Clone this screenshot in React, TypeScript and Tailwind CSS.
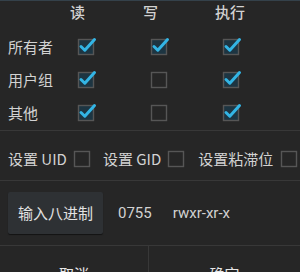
import React from 'react'

type Row = { label: string; checks: boolean[] }

const rows: Row[] = [
  { label: '所有者', checks: [true, true, true] },
  { label: '用户组', checks: [true, false, true] },
  { label: '其他', checks: [true, false, true] },
]

function Box({ checked }: { checked?: boolean }) {
  return (
    <svg width="20" height="20" viewBox="0 0 20 20" className="overflow-visible">
      <rect x="1.5" y="3.5" width="15" height="15" fill={checked ? '#1d3542' : 'none'} stroke="#565656" strokeWidth="1.4" />
      {checked && (
        <path d="M4 10.5 L7.8 14.2 L17.5 3.5" fill="none" stroke="#33b5e5" strokeWidth="3" strokeLinecap="round" strokeLinejoin="round" />
      )}
    </svg>
  )
}

export default function App() {
  return (
    <div
      className="w-[300px] h-[272px] overflow-hidden bg-[#262626] text-[#d2d2d2] border-t border-[#34414a]"
      style={{ fontFamily: '"Noto Sans CJK SC", "Noto Sans", sans-serif' }}
    >
      <div className="grid grid-cols-[62px_73px_72px_1fr] px-2 h-[23px] items-center text-[15px] font-medium">
        <div />
        <div>读</div>
        <div>写</div>
        <div>执行</div>
      </div>
      <div className="mt-[7px]">
        {rows.map(r => (
          <div key={r.label} className="grid grid-cols-[69px_73px_72px_1fr] px-2 h-[33px] items-center text-[15px]">
            <div>{r.label}</div>
            {r.checks.map((c, i) => (
              <div key={i} className="-mt-[3px]"><Box checked={c} /></div>
            ))}
          </div>
        ))}
      </div>
      <div className="h-px bg-[#383838]" />
      <div className="flex items-center h-[49px] pt-[7px] pl-2 text-[15px] whitespace-nowrap">
        <span>设置 UID</span>
        <span className="ml-[6px] -mt-[3px]"><Box /></span>
        <span className="ml-[10px]">设置 GID</span>
        <span className="ml-[6px] -mt-[3px]"><Box /></span>
        <span className="ml-[11px]">设置粘滞位</span>
        <span className="ml-[7px] -mt-[3px]"><Box /></span>
      </div>
      <div className="h-px bg-[#383838]" />
      <div className="flex items-center h-[64px] pl-2 text-[15px]">
        <button className="w-[95px] h-[42px] bg-[#2e3134] text-[#e2e2e2] rounded-[2px] shadow-[0_1px_1px_rgba(0,0,0,0.5)]">
          输入八进制
        </button>
        <span className="ml-[15px]" style={{ fontFamily: 'Roboto, sans-serif' }}>0755</span>
        <span className="ml-[21px]" style={{ fontFamily: 'Roboto, sans-serif' }}>rwxr-xr-x</span>
      </div>
      <div className="h-px bg-[#383838]" />
      <div className="grid grid-cols-[148px_1px_1fr] h-[50px] text-[15px] text-[#e6e6e6]">
        <button className="pt-[6px]">取消</button>
        <div className="bg-[#383838]" />
        <button className="pt-[6px]">确定</button>
      </div>
    </div>
  )
}
